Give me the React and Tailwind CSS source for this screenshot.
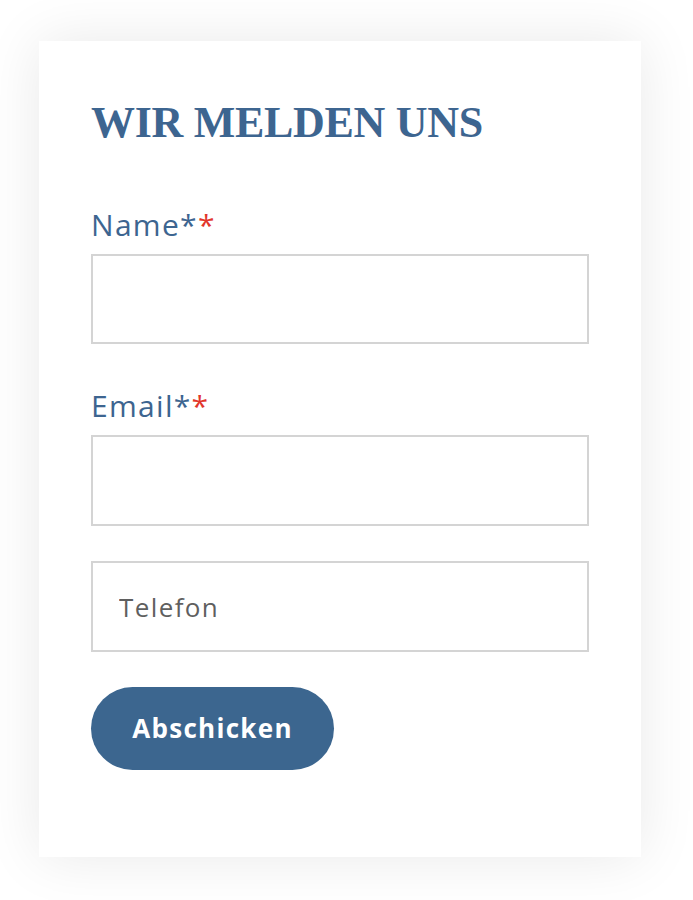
import React from 'react';

function Label({ children }) {
  return (
    <label className="block text-[30px] leading-none text-[#3d6590] tracking-[1.3px] mb-[14px]" style={{ fontFamily: '"Open Sans", sans-serif' }}>
      {children}*<span className="text-[#e2362b]">*</span>
    </label>
  );
}

export default function App() {
  return (
    <div className="min-h-[900px] bg-white pt-[41px] px-[39px]" style={{ fontFamily: '"Open Sans", sans-serif' }}>
      <div className="w-[602px] h-[816px] bg-white shadow-[0_0_55px_rgba(0,0,0,0.09)] pl-[52px] pr-[52px] pt-[60px]">
        <h2 className="text-[44px] leading-none font-bold text-[#3d6590] tracking-[-0.3px] mb-[65px]" style={{ fontFamily: '"Liberation Serif", serif' }}>
          WIR MELDEN UNS
        </h2>

        <form className="flex flex-col" onSubmit={(e) => e.preventDefault()}>
          <Label>Name</Label>
          <input type="text" className="w-[498px] h-[90px] border-2 border-[#d4d4d4] bg-white outline-none" />

          <div className="mt-[47px]">
            <Label>Email</Label>
          </div>
          <input type="email" className="w-[498px] h-[91px] border-2 border-[#d4d4d4] bg-white outline-none" />

          <input
            type="tel"
            placeholder="Telefon"
            className="mt-[35px] w-[498px] h-[91px] border-2 border-[#d4d4d4] bg-white outline-none px-[26px] text-[26px] tracking-[1.4px] placeholder:text-[#5f5f5f]"
          />

          <div className="mt-[35px]">
            <button type="submit" className="h-[83px] w-[243px] rounded-full bg-[#3c668f] text-white text-[26px] tracking-[1.3px] font-bold">
              Abschicken
            </button>
          </div>
        </form>
      </div>
    </div>
  );
}
